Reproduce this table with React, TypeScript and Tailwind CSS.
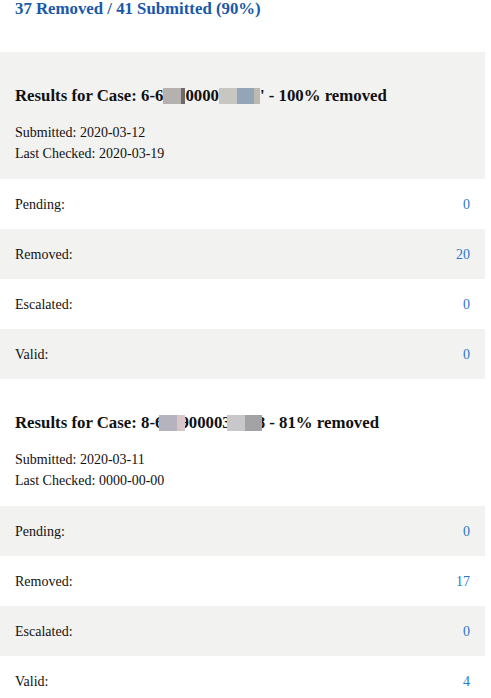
type Counts = { pending: number; removed: number; escalated: number; valid: number };

const Redact = ({ parts, className = "" }: { parts: [string, number][]; className?: string }) => (
  <span className={`relative inline-flex h-[16px] align-[-3px] ${className}`}>
    {parts.map(([color, w], i) => (
      <span key={i} className="h-full" style={{ backgroundColor: color, width: w }} />
    ))}
  </span>
);

const CountRows = ({ counts, startGray }: { counts: Counts; startGray: boolean }) => {
  const rows: [string, number][] = [
    ["Pending:", counts.pending],
    ["Removed:", counts.removed],
    ["Escalated:", counts.escalated],
    ["Valid:", counts.valid],
  ];
  return (
    <>
      {rows.map(([label, value], i) => {
        const gray = startGray ? i % 2 === 0 : i % 2 === 1;
        return (
          <div
            key={label}
            className={`flex h-[50px] items-center justify-between px-[15px] text-[14px] ${
              gray ? "bg-[#f2f2f1]" : "bg-white"
            }`}
          >
            <span className="text-[#111]">{label}</span>
            <span className="text-[#2a78c6]">{value}</span>
          </div>
        );
      })}
    </>
  );
};

export default function App() {
  return (
    <div
      className="w-[485px] bg-white text-[#111]"
      style={{ fontFamily: '"Liberation Serif", "Times New Roman", serif' }}
    >
      <h2 className="px-[15px] text-[16.8px] font-bold leading-[17px] text-[#1a58aa]">
        37 Removed / 41 Submitted (90%)
      </h2>

      <div className="mt-[35px] bg-[#f2f2f1] px-[15px] pt-[34px] pb-[15px]">
        <h3 className="text-[16.8px] font-bold leading-[20px] whitespace-nowrap">
          Results for Case: 6-6
          <Redact parts={[["#b5b1ae", 18], ["#6e6a68", 4]]} />
          0000
          <Redact parts={[["#c7c6c0", 18], ["#93a6b7", 17], ["#bdbbb1", 6]]} />' - 100% removed
        </h3>
        <div className="mt-[16px] text-[14px] leading-[21px]">
          <p>Submitted: 2020-03-12</p>
          <p>Last Checked: 2020-03-19</p>
        </div>
      </div>
      <CountRows counts={{ pending: 0, removed: 20, escalated: 0, valid: 0 }} startGray={false} />

      <div className="bg-white px-[15px] pt-[34px] pb-[15px]">
        <h3 className="text-[16.8px] font-bold leading-[20px] whitespace-nowrap">
          Results for Case: 8-6
          <Redact className="-ml-[4px] -mr-[5px]" parts={[["#b4b3be", 18], ["#d9c6c8", 8]]} />
          900003
          <Redact className="-ml-[4px] -mr-[5px]" parts={[["#c8c8cc", 18], ["#a3a3a5", 17]]} />
          8 - 81% removed
        </h3>
        <div className="mt-[16px] text-[14px] leading-[21px]">
          <p>Submitted: 2020-03-11</p>
          <p>Last Checked: 0000-00-00</p>
        </div>
      </div>
      <CountRows counts={{ pending: 0, removed: 17, escalated: 0, valid: 4 }} startGray={true} />
    </div>
  );
}
